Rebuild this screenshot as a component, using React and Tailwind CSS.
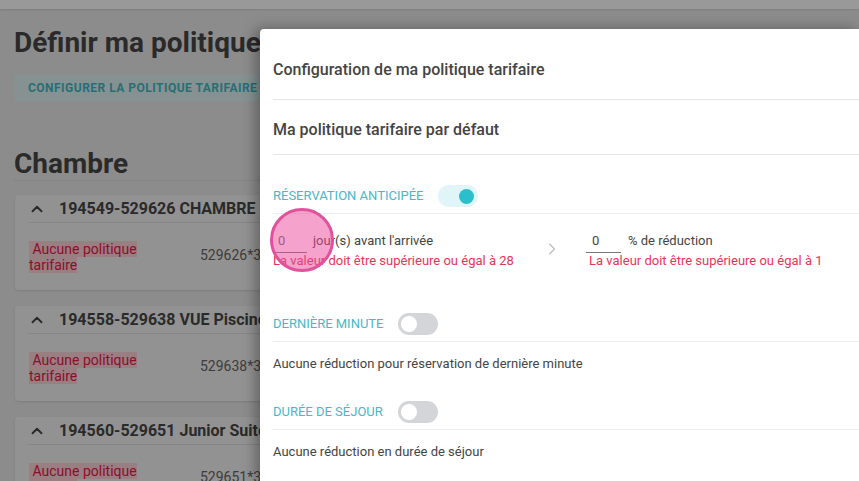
import { ChevronUp, ChevronRight } from 'lucide-react'

const rooms = [
  { id: '194549-529626', name: 'CHAMBRE', code: '529626*3' },
  { id: '194558-529638', name: 'VUE Piscine', code: '529638*3' },
  { id: '194560-529651', name: 'Junior Suite', code: '529651*3' },
]

// ── Background page (dimmed by the dialog overlay) ───────────────────────────
function RoomCard({ room }) {
  return (
    <div className="bg-[#f2f2f2] rounded shadow-sm mb-[16px] h-[95px] w-[820px]">
      <div className="ml-[13px] h-[28px] flex items-center border-b border-[#dcdcdc]">
        <ChevronUp size={18} strokeWidth={2.5} className="text-[#333]" />
        <span className="ml-[13px] text-[16px] font-bold text-[#333] whitespace-nowrap">
          {room.id} {room.name}
        </span>
      </div>
      <div className="flex items-center pl-[14px] pt-[18px]">
        <div className="w-[150px] text-[14px] leading-[16px]">
          <span className="bg-[#ffcdd5] text-[#e8002e]">&nbsp;Aucune politique tarifaire</span>
        </div>
        <div className="ml-[21px] text-[14px] text-[#555] -mt-[4px]">{room.code}</div>
      </div>
    </div>
  )
}

function BackgroundPage() {
  return (
    <div className="absolute inset-0 bg-[#e8e8e8]">
      <div className="h-[9px] bg-white shadow" />
      <div className="px-[14px]">
        <h1 className="mt-[17px] text-[28px] leading-[33px] font-bold text-[#333] whitespace-nowrap">
          Définir ma politique tarifaire
        </h1>
        <button className="mt-[15px] h-[27px] px-[14px] rounded bg-[#dcf2f3] text-[12px] font-bold tracking-[0.04em] text-[#2ab3bc] whitespace-nowrap">
          CONFIGURER LA POLITIQUE TARIFAIRE
        </button>
        <h2 className="mt-[47px] text-[28px] leading-[32px] font-bold text-[#333] border-b border-[#d6d6d6]">
          Chambre
        </h2>
        <div className="mt-[14px] pl-[1px]">
          {rooms.map((r) => (
            <RoomCard key={r.id} room={r} />
          ))}
        </div>
      </div>
    </div>
  )
}

// ── Switch ───────────────────────────────────────────────────────────────────
function Switch({ on }) {
  return (
    <div
      className={
        on
          ? 'w-[40px] h-[22px] rounded-full bg-[#dff5f7] flex items-center justify-end pr-[4px]'
          : 'w-[40px] h-[22px] rounded-full bg-[#d3d5d9] flex items-center justify-start pl-[3px]'
      }
    >
      <div className={on ? 'w-[15px] h-[15px] rounded-full bg-[#2bbfce]' : 'w-[16px] h-[16px] rounded-full bg-white'} />
    </div>
  )
}

function SectionHead({ label, on, gap }) {
  return (
    <div className="flex items-center h-[22px] border-b border-[#ececec] box-content pb-[6px]">
      <span className="text-[13px] text-[#48b8c6] uppercase whitespace-nowrap">{label}</span>
      <div className={gap}>
        <Switch on={on} />
      </div>
    </div>
  )
}

// ── Dialog ───────────────────────────────────────────────────────────────────
function PricingDialog() {
  return (
    <div className="absolute left-[260px] top-[29px] right-0 bottom-0 bg-white rounded-tl shadow-[-4px_0_14px_rgba(0,0,0,0.35)] pl-[13px] text-[#444]">
      <div className="pt-[32px] pb-[20px] border-b border-[#e6e6e6]">
        <div className="text-[16px] leading-[18px] font-medium text-[#444]">Configuration de ma politique tarifaire</div>
      </div>
      <div className="pt-[21px] pb-[15px] border-b border-[#e6e6e6]">
        <div className="text-[16px] leading-[18px] font-medium text-[#444]">Ma politique tarifaire par défaut</div>
      </div>

      <div className="pt-[30px]">
        <SectionHead label="Réservation anticipée" on gap="ml-[15px]" />
      </div>

      <div className="flex pt-[18px]">
        <div className="w-[262px]">
          <div className="flex items-start">
            <div className="w-[34px] h-[21px] border-b border-[#777] text-[13px] leading-[17px] pl-[5px] text-[#666]">0</div>
            <span className="ml-[6px] text-[13px] leading-[17px] text-[#444] whitespace-nowrap">jour(s) avant l'arrivée</span>
          </div>
          <div className="text-[13px] leading-[15px] text-[#e53658] whitespace-nowrap">
            La valeur doit être supérieure ou égal à 28
          </div>
        </div>
        <div className="w-[34px] flex justify-center pt-[7px]">
          <ChevronRight size={20} strokeWidth={1.4} className="text-[#bdbdbd]" />
        </div>
        <div className="ml-[17px]">
          <div className="flex items-start">
            <div className="w-[35px] h-[21px] border-b border-[#777] text-[13px] leading-[17px] pl-[6px] text-[#444]">0</div>
            <span className="ml-[7px] text-[13px] leading-[17px] text-[#444] whitespace-nowrap">% de réduction</span>
          </div>
          <div className="pl-[3px] text-[13px] leading-[15px] text-[#e53658] whitespace-nowrap">
            La valeur doit être supérieure ou égal à 1
          </div>
        </div>
      </div>

      <div className="pt-[45px]">
        <SectionHead label="Dernière minute" gap="ml-[14px]" />
      </div>
      <div className="pt-[13px] text-[13px] leading-[18px] text-[#444]">
        Aucune réduction pour réservation de dernière minute
      </div>

      <div className="pt-[28px]">
        <SectionHead label="Durée de séjour" gap="ml-[15px]" />
      </div>
      <div className="pt-[13px] text-[13px] leading-[18px] text-[#444]">Aucune réduction en durée de séjour</div>
    </div>
  )
}

export default function App() {
  return (
    <div className="relative w-[859px] h-[481px] overflow-hidden font-['Roboto',sans-serif]">
      <BackgroundPage />
      {/* dialog overlay */}
      <div className="absolute inset-0 bg-[#212121]/[0.46]" />
      <PricingDialog />
      {/* click indicator */}
      <div className="absolute left-[270px] top-[208px] w-[64px] h-[64px] rounded-full bg-[#ec4899]/50 border-[3px] border-[#e0529c]" />
    </div>
  )
}
